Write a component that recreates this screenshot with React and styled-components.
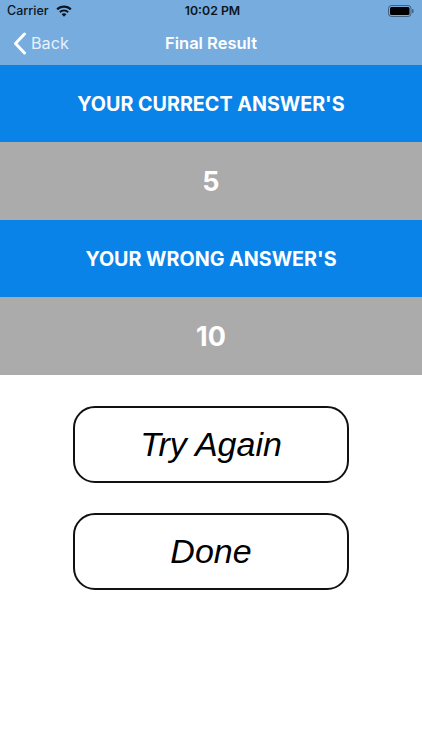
import React from 'react'
import styled, { createGlobalStyle } from 'styled-components'

const GlobalStyle = createGlobalStyle`
  html, body {
    margin: 0;
    padding: 0;
    background: #fff;
  }
  * {
    box-sizing: border-box;
  }
`
const Screen = styled.div`
  width: 422px;
  height: 750px;
  overflow: hidden;
  background: #fff;
  font-family: Inter, "Liberation Sans", sans-serif;
`
const Header = styled.header`
  height: 65px;
  background: #77acdf;
`
const StatusBar = styled.div`
  display: grid;
  grid-template-columns: 1fr auto 1fr;
  align-items: center;
  height: 21px;
  padding: 0 7px;
  color: #0c1622;
  font-size: 12.5px;
  font-weight: 500;
`
const Signal = styled.div`
  display: flex;
  align-items: center;
  gap: 7px;
`
const Clock = styled.div`
  padding-left: 3px;
  font-size: 12.3px;
  font-weight: 600;
`
const BatteryWrap = styled.div`
  display: flex;
  justify-content: flex-end;
  padding-right: 1px;
`
const NavBar = styled.nav`
  display: grid;
  grid-template-columns: 1fr auto 1fr;
  align-items: center;
  height: 44px;
  padding: 0 13px;
  color: #fff;
`
const BackLink = styled.a`
  display: flex;
  align-items: center;
  gap: 4px;
  color: #e8f1fb;
  font-size: 16.2px;
`
const NavTitle = styled.div`
  font-size: 16.5px;
  font-weight: 600;
`
const Row = styled.div`
  display: flex;
  align-items: center;
  justify-content: center;
  height: ${props => props.$height}px;
  padding-top: 1px;
  color: #fff;
  font-size: ${props => props.$size}px;
  font-weight: ${props => props.$weight};
  background: ${props => props.$tone === 'blue' ? '#0a83e9' : '#ababab'};
`
const Actions = styled.div`
  display: flex;
  flex-direction: column;
  align-items: center;
  gap: 30px;
  padding-top: 31px;
`
const ActionButton = styled.button`
  width: 276px;
  height: 77px;
  padding: 0;
  color: #000;
  font-family: "Liberation Sans", Arial, sans-serif;
  font-size: 34px;
  font-style: italic;
  font-weight: 400;
  border: 2px solid #111;
  border-radius: 22px;
  background: #fff;
`

const WifiIcon = () => (
  <svg width="16" height="12" viewBox="0 0 16 12" fill="#0c1622">
    <path d="M8 0.5C5 0.5 2.4 1.7 0.4 3.6L1.9 5.2C3.5 3.6 5.6 2.7 8 2.7s4.5 0.9 6.1 2.5l1.5-1.6C13.6 1.7 11 0.5 8 0.5z" />
    <path d="M8 4.4c-1.9 0-3.6 0.8-4.8 2L4.7 8C5.6 7.1 6.7 6.6 8 6.6s2.4 0.5 3.3 1.4l1.5-1.6C11.6 5.2 9.9 4.4 8 4.4z" />
    <path d="M8 8.2c-1 0-1.8 0.4-2.4 1L8 11.7l2.4-2.5C9.8 8.6 9 8.2 8 8.2z" />
  </svg>
)

const BatteryIcon = () => (
  <svg width="26" height="12" viewBox="0 0 26 12">
    <rect x="0.5" y="0.5" width="22.5" height="11" rx="3" fill="none" stroke="#0c1622" strokeOpacity="0.5" />
    <rect x="2" y="2" width="19.5" height="8" rx="1.5" fill="#000" />
    <rect x="24" y="4" width="1.5" height="4" rx="0.7" fill="#0c1622" fillOpacity="0.5" />
  </svg>
)

const BackChevron = () => (
  <svg width="14" height="23" viewBox="0 0 14 23" fill="none" stroke="#fff" strokeWidth="3" strokeLinecap="round" strokeLinejoin="round">
    <path d="M11.5 2L2.5 11.5L11.5 21" />
  </svg>
)

const rows = [
  { tone: 'blue', height: 77, size: 19.7, weight: 650, text: "YOUR CURRECT ANSWER'S" },
  { tone: 'gray', height: 78, size: 27, weight: 700, text: '5' },
  { tone: 'blue', height: 77, size: 19.7, weight: 650, text: "YOUR WRONG ANSWER'S" },
  { tone: 'gray', height: 78, size: 27, weight: 700, text: '10' },
]

const App = () => (
  <Screen>
    <GlobalStyle />
    <Header>
      <StatusBar>
        <Signal>
          Carrier
          <WifiIcon />
        </Signal>
        <Clock>10:02 PM</Clock>
        <BatteryWrap>
          <BatteryIcon />
        </BatteryWrap>
      </StatusBar>
      <NavBar>
        <BackLink>
          <BackChevron />
          Back
        </BackLink>
        <NavTitle>Final Result</NavTitle>
      </NavBar>
    </Header>
    {rows.map(row => (
      <Row key={row.text} $tone={row.tone} $height={row.height} $size={row.size} $weight={row.weight}>
        {row.text}
      </Row>
    ))}
    <Actions>
      <ActionButton>Try Again</ActionButton>
      <ActionButton>Done</ActionButton>
    </Actions>
  </Screen>
)

export default App
